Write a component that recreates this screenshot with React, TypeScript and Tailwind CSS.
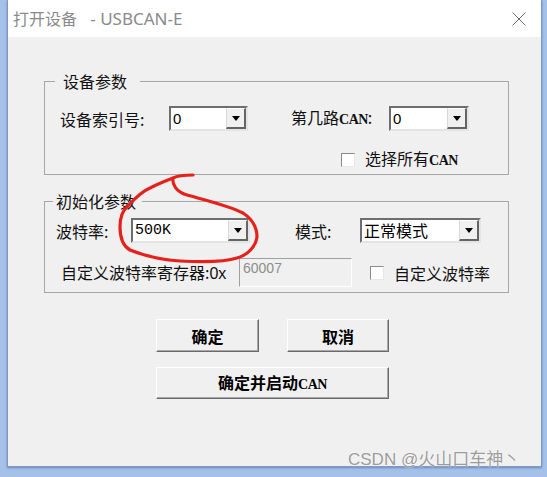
import React from "react";

type ComboProps = {
  width: string;
  value: string;
  valueClass?: string;
};

function Combo({ width, value, valueClass = "" }: ComboProps) {
  return (
    <div
      className={`flex h-[25px] ${width} border-2 border-t-[#6e6e6e] border-l-[#6e6e6e] border-r-[#e4e4e4] border-b-[#e4e4e4] bg-white`}
    >
      <div className={`flex-1 pl-[2px] leading-[21px] text-black ${valueClass}`}>
        {value}
      </div>
      <div className="flex h-[21px] w-[20px] items-center justify-center border border-t-white border-l-[#d8d8d8] border-r-2 border-b-2 border-r-[#646464] border-b-[#646464] bg-[#f0f0f0]">
        <svg width="8" height="5" viewBox="0 0 8 5">
          <path d="M0 0h8L4 5z" fill="#000" />
        </svg>
      </div>
    </div>
  );
}

function CheckBox({ label }: { label: React.ReactNode }) {
  return (
    <div className="flex items-center">
      <div className="h-[14px] w-[14px] border border-t-[#8a8a8a] border-l-[#8a8a8a] border-r-[#e8e8e8] border-b-[#e8e8e8] bg-white" />
      <span className="ml-[10px] text-[16px] leading-[20px]">{label}</span>
    </div>
  );
}

function WinButton({ width, height, children }: { width: string; height: string; children: React.ReactNode }) {
  return (
    <button
      className={`${width} ${height} bg-[#f0f0f0] border border-t-white border-l-white border-r-[#6a6a6a] border-b-[#6a6a6a] shadow-[inset_-1px_-1px_0_#a8a8a8] text-[16px] font-bold leading-[20px] text-black`}
    >
      {children}
    </button>
  );
}

const Can = () => (
  <span className="font-['Liberation_Serif',serif] text-[14px] font-bold tracking-[-0.5px]">CAN</span>
);

export default function App() {
  return (
    <div className="relative h-[477px] w-[547px] overflow-hidden bg-[#a3c1e9] font-['Noto_Sans_CJK_SC',sans-serif] text-[#111]">
      <div className="ml-[7px] flex h-[467px] w-[535px] flex-col border-x border-b border-[#7d98c4] bg-[#f0f0f0] shadow-[0_1px_2px_rgba(60,80,120,0.5)]">
        {/* title bar */}
        <div className="flex h-[37px] items-center justify-between bg-white pl-[5px] pr-[15px]">
          <span className="text-[16px] leading-[20px] text-[#8a8a8a]">
            打开设备
            <span className="font-['Noto_Sans',sans-serif] text-[17px]">&nbsp;&nbsp; - USBCAN-E</span>
          </span>
          <svg width="14" height="14" viewBox="0 0 14 14">
            <path d="M0.5 0.5L13.5 13.5M13.5 0.5L0.5 13.5" stroke="#6a6a6a" strokeWidth="1" />
          </svg>
        </div>

        {/* 设备参数 */}
        <fieldset className="ml-[36px] mt-[34px] w-[465px] border border-[#a7a7a7] pb-[3px]">
          <legend className="ml-[10px] pl-[8px] pr-[13px] text-[16px] leading-[20px]">设备参数</legend>
          <div className="mt-[15px] flex items-center pl-[15px]">
            <span className="w-[109px] text-[16px] leading-[20px]">设备索引号:</span>
            <Combo width="w-[79px]" value="0" valueClass="font-['Liberation_Sans',sans-serif] text-[15px]" />
            <span className="ml-[43px] w-[98px] text-[16px] leading-[20px]">
              第几路<Can />:
            </span>
            <Combo width="w-[80px]" value="0" valueClass="font-['Liberation_Sans',sans-serif] text-[15px]" />
          </div>
          <div className="mt-[17px] pl-[296px]">
            <CheckBox label={<>选择所有<Can /></>} />
          </div>
        </fieldset>

        {/* 初始化参数 */}
        <fieldset className="ml-[36px] mt-[16px] w-[465px] border border-[#a7a7a7] pb-[5px]">
          <legend className="ml-[8px] pl-[3px] pr-[6px] text-[16px] leading-[20px]">初始化参数</legend>
          <div className="mt-[7px] flex items-center pl-[11px]">
            <span className="w-[75px] text-[16px] leading-[20px]">波特率:</span>
            <Combo width="w-[119px]" value="500K" valueClass="font-['Liberation_Mono',monospace] text-[15px]" />
            <span className="ml-[45px] w-[65px] text-[16px] leading-[20px]">模式:</span>
            <Combo width="w-[121px]" value="正常模式" valueClass="text-[16px]" />
          </div>
          <div className="mt-[15px] flex items-center pl-[16px]">
            <span className="w-[178px] text-[16px] leading-[20px]">
              自定义波特率寄存器:<span className="font-['Liberation_Sans',sans-serif]">0x</span>
            </span>
            <div className="h-[29px] w-[113px] border border-t-[#a0a0a0] border-l-[#a0a0a0] border-r-white border-b-white bg-[#f0f0f0] pl-[3px] pt-[1px] font-['Liberation_Sans',sans-serif] text-[14px] leading-[16px] text-[#8d8d8d]">
              60007
            </div>
            <div className="ml-[18px]">
              <CheckBox label="自定义波特率" />
            </div>
          </div>
        </fieldset>

        {/* buttons */}
        <div className="ml-[148px] mt-[26px] flex gap-[28px]">
          <WinButton width="w-[103px]" height="h-[33px]">确定</WinButton>
          <WinButton width="w-[102px]" height="h-[33px]">取消</WinButton>
        </div>
        <div className="ml-[148px] mt-[15px]">
          <WinButton width="w-[233px]" height="h-[32px]">
            确定并启动<Can />
          </WinButton>
        </div>
      </div>

      {/* hand-drawn red mark */}
      <svg className="pointer-events-none absolute left-0 top-0" width="547" height="477" viewBox="0 0 547 477">
        <path
          d="M193 175 C185 175 177 176 173 178 C172 184 176 192 187 195 C205 200 230 206 243 213 C252 219 257 228 257 237 C256 246 248 255 237 258 C225 262 200 262 180 261 C165 260 145 256 130 250 C123 246 120 238 120 227 C120 218 123 210 128 206 C135 198 145 190 152 187 C160 183 168 180 173 178"
          fill="none"
          stroke="#e5211c"
          strokeWidth="3.2"
          strokeLinecap="round"
          strokeLinejoin="round"
        />
      </svg>

      {/* watermark */}
      <div className="absolute left-[348px] top-[447px] text-[17px] leading-[22px] text-[#9c9c9c] [text-shadow:0_0_2px_#fff]">
        <span className="font-['Liberation_Sans',sans-serif]">CSDN @</span>火山口车神丶
      </div>
    </div>
  );
}
